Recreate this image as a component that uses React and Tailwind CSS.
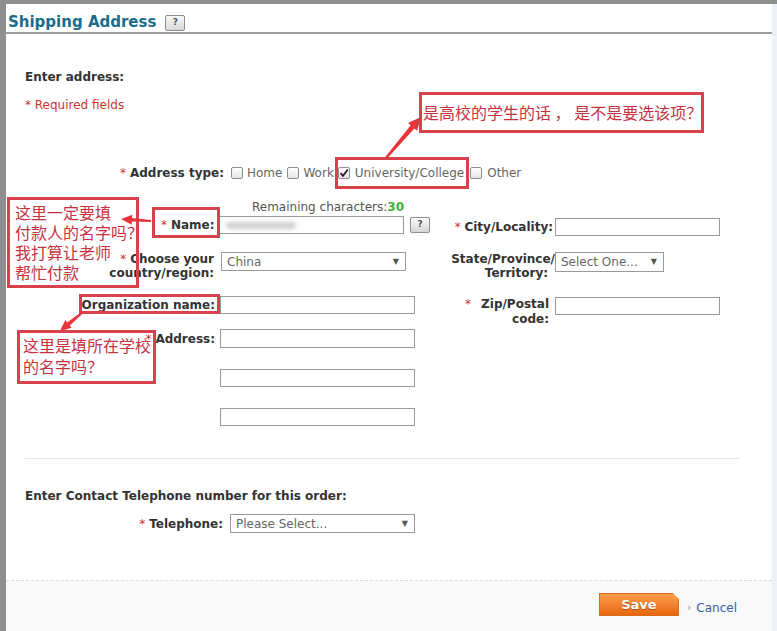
import React from "react";

const arrowPts = (x1, y1, x2, y2, tw = 1, bw = 2.2, hw = 6, hl = 12) => {
  const dx = x2 - x1, dy = y2 - y1, L = Math.hypot(dx, dy);
  const ux = dx / L, uy = dy / L, px = -uy, py = ux;
  const bx = x2 - ux * hl, by = y2 - uy * hl;
  const pts = [
    [x1 + px * tw, y1 + py * tw],
    [bx + px * bw, by + py * bw],
    [bx + px * hw, by + py * hw],
    [x2, y2],
    [bx - px * hw, by - py * hw],
    [bx - px * bw, by - py * bw],
    [x1 - px * tw, y1 - py * tw],
  ];
  return pts.map((p) => p.map((v) => v.toFixed(1)).join(",")).join(" ");
};

const Star = () => <span className="text-[#cc3333] font-normal">* </span>;

const Input = ({ w = "w-[185px]", h = "h-[18px]", cls = "" }) => (
  <div className={`${w} ${h} border border-[#9a9a9a] bg-white shrink-0 ${cls}`} />
);

const Select = ({ w, h = "h-[19px]", text, cls = "" }) => (
  <div
    className={`${w} ${h} border border-[#9a9a9a] bg-white shrink-0 flex items-center justify-between pl-[5px] pr-[6px] text-[12px] font-normal text-[#666] relative z-10 ${cls}`}
  >
    <span>{text}</span>
    <span className="text-[8px] text-[#555]">▼</span>
  </div>
);

const Help = ({ cls = "" }) => (
  <div
    className={`w-[20px] h-[16px] border border-[#8e8e8e] rounded-[2px] bg-gradient-to-b from-[#fafafa] to-[#d8d8d8] flex items-center justify-center text-[9px] font-bold text-[#555] shrink-0 ${cls}`}
  >
    ?
  </div>
);

const Check = ({ checked }) => (
  <span className="w-[12px] h-[12px] border border-[#8f8f8f] rounded-[2px] bg-gradient-to-b from-white to-[#e4e4e4] inline-flex items-center justify-center shrink-0">
    {checked && (
      <svg width="10" height="10" viewBox="0 0 10 10">
        <path d="M1.5 5.2 L4 7.8 L8.8 1.5" stroke="#222" strokeWidth="1.8" fill="none" />
      </svg>
    )}
  </span>
);

const Anno = ({ cls, children }) => (
  <div
    className={`absolute border-[3px] border-[#d8424e] text-[#c8323f] text-[16px] font-['Noto_Sans_CJK_SC',sans-serif] font-normal whitespace-nowrap ${cls}`}
  >
    {children}
  </div>
);

const Frame = ({ cls }) => <div className={`absolute border-[3px] border-[#d8424e] ${cls}`} />;

export default function App() {
  return (
    <div className="relative w-[777px] h-[631px] overflow-hidden flex bg-white font-['DejaVu_Sans',Verdana,sans-serif] text-[12px] text-[#333]">
      <div className="w-[6px] bg-[#8f8f8f] shrink-0" />
      <div className="flex-1 flex flex-col">
        <div className="h-[4px] bg-[#8f8f8f] shrink-0" />
        <div className="flex-1 flex">
          <div className="flex-1 flex flex-col">
            {/* Title */}
            <div className="h-[30px] pt-[9px] pl-[2px] flex items-center border-b-2 border-[#9c9c9c] shrink-0">
              <span className="text-[15px] font-bold text-[#1a6c8d] leading-none">Shipping Address</span>
              <Help cls="ml-[9px] mt-[1px]" />
            </div>

            {/* Body */}
            <div className="pl-[19px] flex flex-col">
              <div className="mt-[35px] leading-[16px] font-bold">Enter address:</div>
              <div className="mt-[12px] leading-[16px] text-[#cc3333]">* Required fields</div>

              <div className="mt-[51px] h-[18px] flex items-center">
                <div className="w-[199px] text-right font-bold whitespace-nowrap">
                  <Star />Address type:
                </div>
                <div className="ml-[7px] flex items-center text-[#666]">
                  <Check />
                  <span className="ml-[4px]">Home</span>
                  <span className="ml-[5px] flex"><Check /></span>
                  <span className="ml-[4px]">Work</span>
                  <span className="ml-[4px] flex"><Check checked /></span>
                  <span className="ml-[5px]">University/College</span>
                  <span className="ml-[6px] flex"><Check /></span>
                  <span className="ml-[5px]">Other</span>
                </div>
              </div>

              {/* Two columns */}
              <div className="mt-[18px] flex">
                <div className="w-[405px] shrink-0 flex flex-col">
                  <div className="h-[14px] leading-[14px] text-right pr-[26px] text-[#555]">
                    Remaining characters:<span className="font-bold text-[#3cb43c]">30</span>
                  </div>
                  <div className="mt-[2px] h-[18px] flex items-center">
                    <div className="w-[190px] text-right font-bold whitespace-nowrap">
                      <Star />Name:
                    </div>
                    <div className="ml-[5px] w-[185px] h-[18px] border border-[#9a9a9a] bg-white relative overflow-hidden">
                      <div className="absolute left-[6px] top-[5px] w-[70px] h-[7px] bg-[#cfcfcf] blur-[2px] rounded-full" />
                    </div>
                    <Help cls="ml-[6px]" />
                  </div>
                  <div className="mt-[18px] flex items-start">
                    <div className="w-[189px] text-right font-bold leading-[14px] whitespace-nowrap">
                      <div><Star />Choose your</div>
                      <div>country/region:</div>
                    </div>
                    <Select w="w-[185px]" text="China" cls="ml-[7px]" />
                  </div>
                  <div className="mt-[16px] h-[18px] flex items-center">
                    <div className="w-[190px] text-right font-bold whitespace-nowrap">Organization name:</div>
                    <Input w="w-[195px]" cls="ml-[5px]" />
                  </div>
                  <div className="mt-[15px] h-[19px] flex items-center">
                    <div className="w-[190px] text-right font-bold whitespace-nowrap">
                      <Star />Address:
                    </div>
                    <Input w="w-[195px]" h="h-[19px]" cls="ml-[5px]" />
                  </div>
                  <Input w="w-[195px]" cls="mt-[21px] ml-[195px]" />
                  <Input w="w-[195px]" cls="mt-[21px] ml-[195px]" />
                </div>

                <div className="flex flex-col">
                  <div className="mt-[18px] h-[18px] flex items-center">
                    <div className="w-[123px] text-right font-bold whitespace-nowrap">
                      <Star />City/Locality:
                    </div>
                    <Input w="w-[165px]" cls="ml-[2px]" />
                  </div>
                  <div className="mt-[16px] flex items-start">
                    <div className="w-[118px] text-right font-bold leading-[14px] whitespace-nowrap">
                      <div className="mr-[-7px]">State/Province/</div>
                      <div>Territory:</div>
                    </div>
                    <Select w="w-[109px]" h="h-[20px]" text="Select One..." cls="ml-[7px]" />
                  </div>
                  <div className="mt-[17px] flex items-start">
                    <div className="w-[119px] text-right font-bold leading-[15px] whitespace-nowrap">
                      <div><span className="text-[#cc3333] font-normal mr-[10px]">*</span>Zip/Postal</div>
                      <div>code:</div>
                    </div>
                    <Input w="w-[165px]" cls="ml-[6px]" />
                  </div>
                </div>
              </div>

              <div className="mt-[32px] w-[715px] h-px bg-[#e6e6e6]" />
              <div className="mt-[29px] leading-[16px] font-bold">
                Enter Contact Telephone number for this order:
              </div>
              <div className="mt-[10px] h-[19px] flex items-center">
                <div className="w-[198px] text-right font-bold whitespace-nowrap">
                  <Star />Telephone:
                </div>
                <Select w="w-[185px]" text="Please Select..." cls="ml-[7px]" />
              </div>
            </div>

            {/* Footer */}
            <div className="mt-auto h-[51px] border-t border-dashed border-[#dcdcdc] bg-[#f9f9f9] flex items-start justify-end pr-[35px] pt-[12px] shrink-0">
              <div className="w-[80px] h-[23px] bg-gradient-to-b from-[#fba04a] to-[#e86508] border border-[#d76a1c] text-white font-bold text-[13px] flex items-center justify-center [text-shadow:0_1px_1px_rgba(120,50,0,0.6)] [clip-path:polygon(0_0,calc(100%_-_6px)_0,100%_6px,100%_100%,0_100%)]">
                Save
              </div>
              <div className="ml-[8px] mt-[6px] flex items-center">
                <span className="text-[#7a8ea8] text-[11px]">›</span>
                <span className="ml-[5px] text-[#2f63a8]">Cancel</span>
              </div>
            </div>
          </div>
          <div className="w-[5px] bg-[#eef2f7] shrink-0" />
        </div>
      </div>

      {/* Annotations */}
      <Anno cls="left-[419px] top-[92px] w-[285px] h-[41px] pl-[1px] leading-[35px] bg-white">
        是高校的学生的话 ， 是不是要选该项？
      </Anno>
      <Frame cls="left-[335px] top-[157px] w-[134px] h-[32px]" />
      <Anno cls="left-[7px] top-[197px] w-[132px] h-[91px] pl-[5px] pt-[2px] leading-[20px]">
        <div>这里一定要填</div>
        <div>付款人的名字吗？</div>
        <div>我打算让老师</div>
        <div>帮忙付款</div>
      </Anno>
      <Frame cls="left-[152px] top-[207px] w-[68px] h-[31px]" />
      <Frame cls="left-[79px] top-[294px] w-[141px] h-[20px]" />
      <Anno cls="left-[17px] top-[330px] w-[139px] h-[54px] pl-[3px] pt-[2px] leading-[21px]">
        <div>这里是填所在学校</div>
        <div>的名字吗？</div>
      </Anno>

      <svg className="absolute left-0 top-0 pointer-events-none" width="777" height="631">
        <polygon points={arrowPts(386, 158, 421, 117, 1.2, 2.4, 6, 13)} fill="#e8353b" />
        <polygon points={arrowPts(151, 221, 121, 219, 1, 1.8, 5, 11)} fill="#e8353b" />
        <polygon points={arrowPts(83, 312, 60, 331, 1, 2, 5, 11)} fill="#e8353b" />
      </svg>
    </div>
  );
}
